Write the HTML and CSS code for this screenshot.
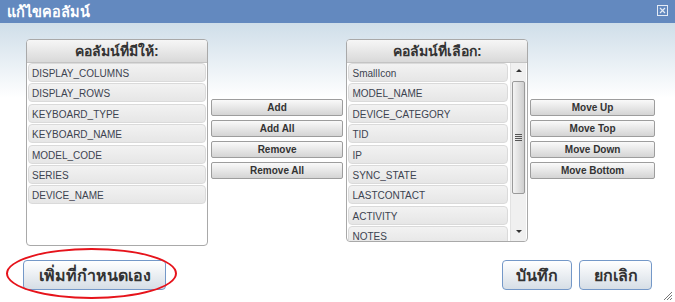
FILE: index.html
```html
<!DOCTYPE html>
<html lang="th">
<head>
    <meta charset="UTF-8">
    <meta name="viewport" content="width=device-width, initial-scale=1.0">
    <title>แก้ไขคอลัมน์</title>
    <link rel="stylesheet" href="styles.css">
</head>
<body>
    <div class="dialog">
        <div class="titlebar">
            <span class="title">แก้ไขคอลัมน์</span>
            <svg class="close" width="11" height="11" viewBox="0 0 11 11">
                <rect x="0.5" y="0.5" width="10" height="10" fill="none" stroke="#e4ebf5"/>
                <path d="M3 3 L8 8 M8 3 L3 8" stroke="#e4ebf5" stroke-width="1.2"/>
            </svg>
        </div>

        <div class="content">
            <div class="columns">
                <!-- คอลัมน์ที่มีให้ -->
                <div class="list list-left">
                    <div class="list-header">คอลัมน์ที่มีให้:</div>
                    <div class="items">
                        <div class="item">DISPLAY_COLUMNS</div>
                        <div class="item">DISPLAY_ROWS</div>
                        <div class="item">KEYBOARD_TYPE</div>
                        <div class="item">KEYBOARD_NAME</div>
                        <div class="item">MODEL_CODE</div>
                        <div class="item">SERIES</div>
                        <div class="item">DEVICE_NAME</div>
                    </div>
                </div>

                <div class="buttons mid-buttons">
                    <button class="btn">Add</button>
                    <button class="btn">Add All</button>
                    <button class="btn">Remove</button>
                    <button class="btn">Remove All</button>
                </div>

                <!-- คอลัมน์ที่เลือก -->
                <div class="list list-right">
                    <div class="list-header">คอลัมน์ที่เลือก:</div>
                    <div class="list-body">
                        <div class="items">
                            <div class="item">SmallIcon</div>
                            <div class="item">MODEL_NAME</div>
                            <div class="item">DEVICE_CATEGORY</div>
                            <div class="item">TID</div>
                            <div class="item">IP</div>
                            <div class="item">SYNC_STATE</div>
                            <div class="item">LASTCONTACT</div>
                            <div class="item">ACTIVITY</div>
                            <div class="item">NOTES</div>
                        </div>
                        <div class="scrollbar">
                            <span class="arrow arrow-up"></span>
                            <div class="thumb"><span class="grip"></span></div>
                            <span class="arrow arrow-down"></span>
                        </div>
                    </div>
                </div>

                <div class="buttons side-buttons">
                    <button class="btn">Move Up</button>
                    <button class="btn">Move Top</button>
                    <button class="btn">Move Down</button>
                    <button class="btn">Move Bottom</button>
                </div>
            </div>

            <div class="footer">
                <span class="marked">
                    <button class="big-btn custom">เพิ่มที่กำหนดเอง</button>
                </span>
                <div class="actions">
                    <button class="big-btn save">บันทึก</button>
                    <button class="big-btn cancel">ยกเลิก</button>
                </div>
            </div>
        </div>

        <svg class="grip-corner" width="12" height="12" viewBox="0 0 12 12">
            <path d="M11 3 L3 11 M11 6 L6 11 M11 9 L9 11" stroke="#777" stroke-width="1"/>
        </svg>
    </div>
</body>
</html>
```

FILE: styles.css
```css
body {
    margin: 0;
    font-family: "Liberation Sans", Arial, sans-serif;
    background-color: #fff;
}
.dialog {
    position: relative;
    width: 675px;
    height: 302px;
    display: flex;
    flex-direction: column;
    overflow: hidden;
}
.titlebar {
    height: 23px;
    flex-shrink: 0;
    background-color: #6389bf;
    display: flex;
    align-items: center;
    justify-content: space-between;
    padding: 0 7px 0 7px;
}
.title {
    color: #fff;
    font-size: 14.5px;
    font-weight: bold;
}
.close {
    display: block;
    margin-top: -2px;
}
.content {
    flex: 1;
    padding: 16px 20px 0 23px;
    background: linear-gradient(#cfdee9, #ffffff 75px);
}
.columns {
    display: flex;
    align-items: flex-start;
    padding-left: 3px;
}
.list {
    width: 182px;
    box-sizing: border-box;
    border: 1px solid #a9a9a9;
    border-radius: 4px;
    background-color: #fff;
    overflow: hidden;
}
.list-left {
    height: 207px;
}
.list-right {
    height: 203px;
    margin-left: 3px;
}
.list-header {
    height: 22px;
    line-height: 22px;
    text-align: center;
    font-size: 14px;
    font-weight: bold;
    color: #333;
    background: linear-gradient(#f6f6f6, #d9d9d9);
    border-bottom: 1px solid #c4c4c4;
}
.items {
    padding: 0 1px;
}
.item {
    height: 19px;
    line-height: 19px;
    box-sizing: border-box;
    margin-bottom: 1.4px;
    padding-left: 3px;
    border: 1px solid #dadada;
    border-radius: 4px;
    background: linear-gradient(#f2f2f2, #e6e6e6);
    font-size: 10px;
    color: #3c4350;
    white-space: nowrap;
}
.list-body {
    display: flex;
    height: 179px;
}
.list-body .items {
    flex: 1;
    overflow: hidden;
}
.scrollbar {
    width: 15px;
    margin: 0 1px 0 1px;
    background-color: #f0f0f0;
    border-left: 1px solid #e2e2e2;
    display: flex;
    flex-direction: column;
    align-items: center;
}
.arrow {
    width: 0;
    height: 0;
    border-left: 3px solid transparent;
    border-right: 3px solid transparent;
}
.arrow-up {
    margin-top: 6px;
    border-bottom: 3px solid #333;
}
.arrow-down {
    margin-top: 36px;
    border-top: 3px solid #333;
}
.thumb {
    width: 13px;
    height: 113px;
    margin-top: 9px;
    box-sizing: border-box;
    border: 1px solid #9a9a9a;
    border-radius: 2px;
    background: linear-gradient(90deg, #f4f4f4, #cfcfcf);
    display: flex;
    align-items: center;
    justify-content: center;
}
.grip {
    width: 7px;
    height: 7px;
    background: repeating-linear-gradient(#555 0 1px, transparent 1px 2px);
}
.buttons {
    display: flex;
    flex-direction: column;
    gap: 4px;
    margin-top: 60px;
}
.mid-buttons {
    width: 133px;
    margin-left: 3px;
}
.side-buttons {
    width: 125px;
    margin-left: 2px;
}
.btn {
    height: 17px;
    padding: 0;
    border: 1px solid #9d9d9d;
    border-radius: 2px;
    background: linear-gradient(#fafafa, #d4d4d4);
    font-family: "Liberation Sans", Arial, sans-serif;
    font-size: 10px;
    font-weight: bold;
    color: #333;
}
.footer {
    display: flex;
    justify-content: space-between;
    margin-top: 14px;
    padding-right: 3px;
}
.actions {
    display: flex;
    gap: 7px;
}
.marked {
    position: relative;
    display: block;
}
.marked::after {
    content: "";
    position: absolute;
    left: -17px;
    top: -12px;
    width: 171px;
    height: 51px;
    box-sizing: border-box;
    border: 2px solid #e6131b;
    border-radius: 50%;
    pointer-events: none;
}
.big-btn {
    height: 30px;
    padding: 0;
    border: 1px solid #7498c8;
    border-radius: 4px;
    background: linear-gradient(#ffffff, #d6dee6);
    font-family: "Liberation Sans", Arial, sans-serif;
    font-size: 16px;
    font-weight: bold;
    color: #333;
}
.custom {
    width: 143px;
}
.save {
    width: 70px;
}
.cancel {
    width: 73px;
}
.grip-corner {
    position: absolute;
    right: 2px;
    bottom: 1px;
}
```
